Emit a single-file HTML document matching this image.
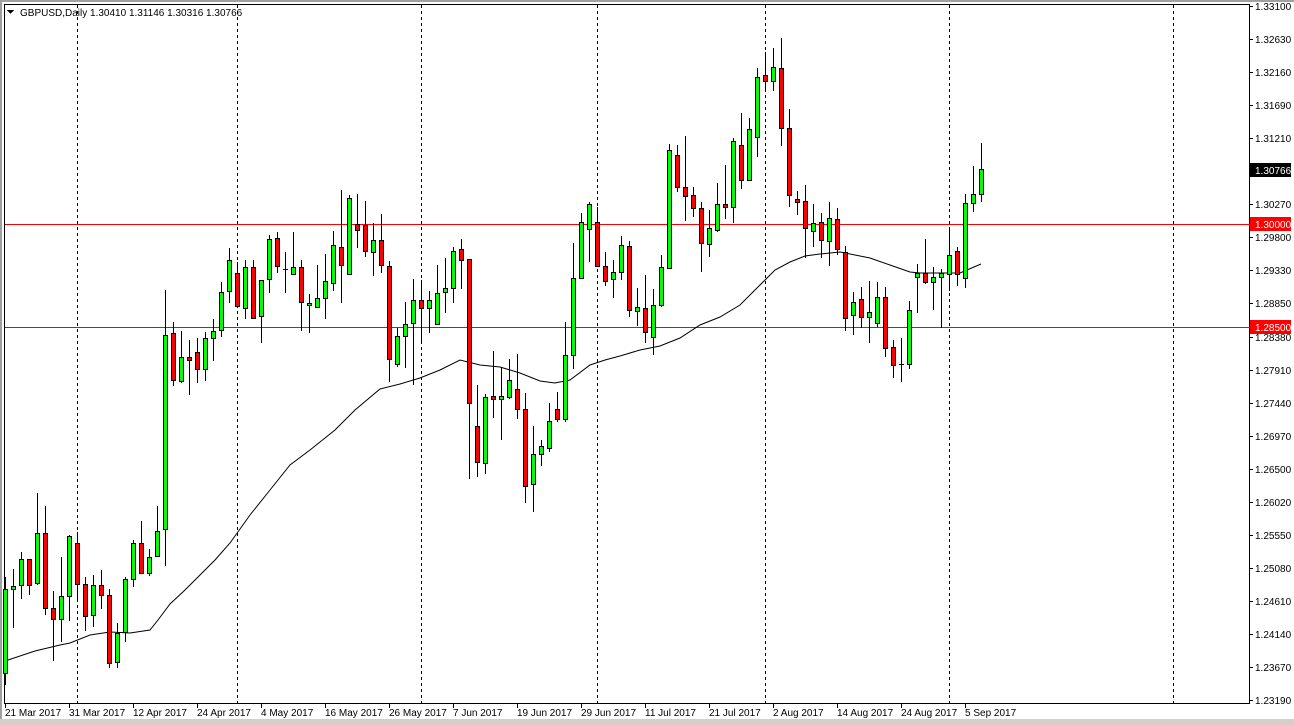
<!DOCTYPE html>
<html><head><meta charset="utf-8">
<style>
html,body{margin:0;padding:0;background:#fff;width:1294px;height:725px;overflow:hidden}
svg{display:block}
text{font-family:"Liberation Sans",sans-serif;font-size:10px;fill:#000}
</style></head>
<body>
<svg id="s" width="1294" height="725" viewBox="0 0 1294 725" xmlns="http://www.w3.org/2000/svg" shape-rendering="crispEdges">
<rect x="0" y="0" width="1294" height="725" fill="#fff"/>
<!-- outer frame -->
<rect x="0" y="0" width="2" height="725" fill="#a0a0a0"/>
<rect x="0" y="0" width="1294" height="2" fill="#a0a0a0"/>
<rect x="0" y="719" width="1294" height="6" fill="#d4d0c8"/>
<!-- plot frame -->
<line x1="4.5" y1="4" x2="4.5" y2="704" stroke="#000"/>
<line x1="4" y1="4.5" x2="1249" y2="4.5" stroke="#000"/>
<line x1="1249.5" y1="4" x2="1249.5" y2="704" stroke="#000"/>
<line x1="4" y1="703.5" x2="1250" y2="703.5" stroke="#000"/>
<!-- grid -->
<g stroke="#000" stroke-dasharray="3,3">
<line x1="77.5" y1="5" x2="77.5" y2="703"/>
<line x1="237.5" y1="5" x2="237.5" y2="703"/>
<line x1="421.5" y1="5" x2="421.5" y2="703"/>
<line x1="597.5" y1="5" x2="597.5" y2="703"/>
<line x1="765.5" y1="5" x2="765.5" y2="703"/>
<line x1="949.5" y1="5" x2="949.5" y2="703"/>
<line x1="1173.5" y1="5" x2="1173.5" y2="703"/>
</g>
<!-- levels -->
<line x1="5" y1="224.5" x2="1250" y2="224.5" stroke="#f00"/>
<line x1="5" y1="327.5" x2="1250" y2="327.5" stroke="#f00"/>
<!-- MA -->
<polyline fill="none" stroke="#000" stroke-width="1" shape-rendering="auto" points="5,661 35,651 60,645 70,643 90,635 110,632 130,633 150,630 158,620 170,604 185,590 200,575 215,560 230,543 250,515 270,490 290,465 310,450 335,430 355,410 380,389 400,384 420,378 440,370 460,360 480,365 500,367 520,373 540,381 555,383 570,380 590,365 605,360 620,356 640,350 660,346 680,338 700,325 720,317 740,305 760,285 775,270 790,262 805,256 820,254 840,252 845,253 870,258 890,265 910,272 920,273 960,273 981,264"/>
<g id="c"></g>
<!-- title -->
<polygon points="7,10 14,10 10.5,14" fill="#000"/>
<text x="20" y="16">GBPUSD,Daily  1.30410 1.31146 1.30316 1.30766</text>
<!-- price axis -->
<g stroke="#000">
<line x1="1250" y1="6.5" x2="1253" y2="6.5"/><line x1="1250" y1="39.5" x2="1253" y2="39.5"/><line x1="1250" y1="72.5" x2="1253" y2="72.5"/><line x1="1250" y1="105.5" x2="1253" y2="105.5"/><line x1="1250" y1="138.5" x2="1253" y2="138.5"/><line x1="1250" y1="171.5" x2="1253" y2="171.5"/><line x1="1250" y1="204.5" x2="1253" y2="204.5"/><line x1="1250" y1="237.5" x2="1253" y2="237.5"/><line x1="1250" y1="270.5" x2="1253" y2="270.5"/><line x1="1250" y1="303.5" x2="1253" y2="303.5"/><line x1="1250" y1="337.5" x2="1253" y2="337.5"/><line x1="1250" y1="370.5" x2="1253" y2="370.5"/><line x1="1250" y1="403.5" x2="1253" y2="403.5"/><line x1="1250" y1="436.5" x2="1253" y2="436.5"/><line x1="1250" y1="469.5" x2="1253" y2="469.5"/><line x1="1250" y1="502.5" x2="1253" y2="502.5"/><line x1="1250" y1="535.5" x2="1253" y2="535.5"/><line x1="1250" y1="568.5" x2="1253" y2="568.5"/><line x1="1250" y1="601.5" x2="1253" y2="601.5"/><line x1="1250" y1="634.5" x2="1253" y2="634.5"/><line x1="1250" y1="667.5" x2="1253" y2="667.5"/><line x1="1250" y1="700.5" x2="1253" y2="700.5"/>
</g>
<g>
<text x="1255" y="10">1.33100</text>
<text x="1255" y="43">1.32630</text>
<text x="1255" y="76">1.32160</text>
<text x="1255" y="109">1.31690</text>
<text x="1255" y="142">1.31210</text>
<text x="1255" y="208">1.30270</text>
<text x="1255" y="241">1.29800</text>
<text x="1255" y="274">1.29330</text>
<text x="1255" y="307">1.28850</text>
<text x="1255" y="341">1.28380</text>
<text x="1255" y="374">1.27910</text>
<text x="1255" y="407">1.27440</text>
<text x="1255" y="440">1.26970</text>
<text x="1255" y="473">1.26500</text>
<text x="1255" y="506">1.26020</text>
<text x="1255" y="539">1.25550</text>
<text x="1255" y="572">1.25080</text>
<text x="1255" y="605">1.24610</text>
<text x="1255" y="638">1.24140</text>
<text x="1255" y="671">1.23670</text>
<text x="1255" y="704">1.23190</text>
</g>
<rect x="1250" y="163" width="41" height="14" fill="#000"/>
<text x="1255" y="174" style="fill:#fff">1.30766</text>
<rect x="1250" y="217" width="41" height="14" fill="#f00"/>
<text x="1255" y="228" style="fill:#fff">1.30000</text>
<rect x="1250" y="320" width="41" height="14" fill="#f00"/>
<text x="1255" y="331" style="fill:#fff">1.28500</text>
<!-- date axis -->
<g stroke="#000">
<line x1="5.5" y1="704" x2="5.5" y2="708"/><line x1="69.5" y1="704" x2="69.5" y2="708"/><line x1="133.5" y1="704" x2="133.5" y2="708"/><line x1="197.5" y1="704" x2="197.5" y2="708"/><line x1="261.5" y1="704" x2="261.5" y2="708"/><line x1="325.5" y1="704" x2="325.5" y2="708"/><line x1="389.5" y1="704" x2="389.5" y2="708"/><line x1="453.5" y1="704" x2="453.5" y2="708"/><line x1="517.5" y1="704" x2="517.5" y2="708"/><line x1="581.5" y1="704" x2="581.5" y2="708"/><line x1="645.5" y1="704" x2="645.5" y2="708"/><line x1="709.5" y1="704" x2="709.5" y2="708"/><line x1="773.5" y1="704" x2="773.5" y2="708"/><line x1="837.5" y1="704" x2="837.5" y2="708"/><line x1="901.5" y1="704" x2="901.5" y2="708"/><line x1="965.5" y1="704" x2="965.5" y2="708"/>
</g>
<g>
<text x="5" y="716">21 Mar 2017</text>
<text x="69" y="716">31 Mar 2017</text>
<text x="133" y="716">12 Apr 2017</text>
<text x="197" y="716">24 Apr 2017</text>
<text x="261" y="716">4 May 2017</text>
<text x="325" y="716">16 May 2017</text>
<text x="389" y="716">26 May 2017</text>
<text x="453" y="716">7 Jun 2017</text>
<text x="517" y="716">19 Jun 2017</text>
<text x="581" y="716">29 Jun 2017</text>
<text x="645" y="716">11 Jul 2017</text>
<text x="709" y="716">21 Jul 2017</text>
<text x="773" y="716">2 Aug 2017</text>
<text x="837" y="716">14 Aug 2017</text>
<text x="901" y="716">24 Aug 2017</text>
<text x="965" y="716">5 Sep 2017</text>
</g>
</svg>
<script>
var d=[
[577,589,673,685,'g'],[569,586,589,628,'g'],[552,559,585,599,'g'],[559,559,585,595,'r'],[493,533,583,585,'g'],
[506,533,608,615,'r'],[591,608,619,661,'r'],[557,596,619,642,'g'],[535,536,596,621,'g'],[532,543,584,600,'r'],
[577,584,616,631,'r'],[575,585,615,627,'g'],[570,585,595,609,'r'],[589,595,663,668,'r'],[623,633,662,668,'g'],
[577,579,632,642,'g'],[540,543,579,587,'g'],[521,543,573,573,'r'],[549,557,573,576,'g'],[506,531,556,557,'g'],
[290,335,529,566,'g'],[322,333,380,386,'r'],[331,357,381,383,'g'],[340,357,360,395,'r'],[338,352,369,383,'r'],
[332,338,369,381,'g'],[319,331,338,361,'g'],[282,292,330,337,'g'],[248,260,291,303,'g'],[262,273,306,307,'r'],
[260,267,308,319,'g'],[260,267,318,318,'r'],[280,280,316,343,'g'],[235,239,279,293,'g'],[232,238,266,273,'r'],
[252,269,269,293,'d'],[232,267,274,274,'g'],[260,267,302,331,'r'],[294,303,305,333,'g'],[265,298,307,307,'g'],
[254,281,298,319,'g'],[231,245,283,291,'g'],[190,247,265,303,'r'],[195,198,274,274,'g'],[194,224,230,248,'r'],
[201,225,251,257,'r'],[223,240,252,276,'g'],[214,240,265,273,'r'],[261,266,359,382,'r'],[328,336,364,367,'g'],
[302,324,336,368,'g'],[279,300,323,385,'g'],[280,300,308,343,'r'],[291,300,308,333,'g'],[265,293,324,325,'g'],
[258,288,292,313,'g'],[247,251,288,303,'g'],[239,249,260,289,'r'],[259,259,403,479,'r'],[385,426,462,477,'r'],
[394,397,463,474,'g'],[351,396,399,418,'r'],[367,396,399,440,'g'],[359,380,397,399,'g'],[354,389,409,419,'r'],
[393,409,486,503,'r'],[426,454,484,512,'g'],[440,446,454,466,'g'],[403,421,448,452,'g'],[392,409,419,422,'r'],
[322,355,419,422,'g'],[243,278,355,369,'g'],[213,222,278,278,'g'],[202,204,229,262,'g'],[207,222,266,266,'r'],
[252,266,281,286,'r'],[260,272,279,298,'g'],[236,245,272,280,'g'],[241,246,310,317,'r'],[288,307,311,326,'g'],
[275,308,332,343,'r'],[289,305,337,355,'g'],[255,267,305,307,'g'],[144,150,268,269,'g'],[145,155,187,192,'r'],
[136,187,196,221,'r'],[187,195,208,217,'r'],[202,208,243,272,'r'],[210,228,244,257,'g'],[183,204,230,232,'g'],
[165,204,207,219,'r'],[138,141,207,223,'g'],[113,145,180,189,'r'],[118,129,180,180,'g'],[68,77,137,157,'g'],
[52,75,81,91,'r'],[48,67,81,91,'g'],[38,68,128,146,'r'],[109,128,195,207,'r'],[191,199,202,215,'r'],
[185,201,228,258,'r'],[204,223,231,247,'g'],[213,222,240,258,'r'],[202,218,241,266,'g'],[208,219,249,255,'r'],
[246,252,318,331,'r'],[292,302,315,335,'g'],[287,299,317,328,'r'],[281,312,317,343,'g'],[282,297,323,327,'g'],
[287,297,348,357,'r'],[340,347,365,378,'r'],[338,364,364,382,'d'],[301,310,364,369,'g'],[264,273,277,313,'g'],
[239,273,282,284,'r'],[267,277,282,310,'g'],[269,273,277,328,'g'],[227,255,274,291,'g'],[247,251,274,286,'r'],
[194,203,278,288,'g'],[166,194,203,212,'g'],[143,169,194,202,'g']];
var h='';
for(var i=0;i<d.length;i++){var c=d[i],x=5+8*i;
h+='<line x1="'+(x+0.5)+'" y1="'+c[0]+'" x2="'+(x+0.5)+'" y2="'+c[3]+'" stroke="#000"/>';
if(c[4]=='d'||c[2]-c[1]<1){h+='<line x1="'+(x-2)+'" y1="'+(c[1]+0.5)+'" x2="'+(x+3)+'" y2="'+(c[1]+0.5)+'" stroke="#000"/>';}
else{h+='<rect x="'+(x-1.5)+'" y="'+(c[1]+0.5)+'" width="4" height="'+(c[2]-c[1])+'" fill="'+(c[4]=='g'?'#00ff00':'#ff0000')+'" stroke="#000"/>';}
}
document.getElementById('c').innerHTML=h;
</script>
</body></html>
